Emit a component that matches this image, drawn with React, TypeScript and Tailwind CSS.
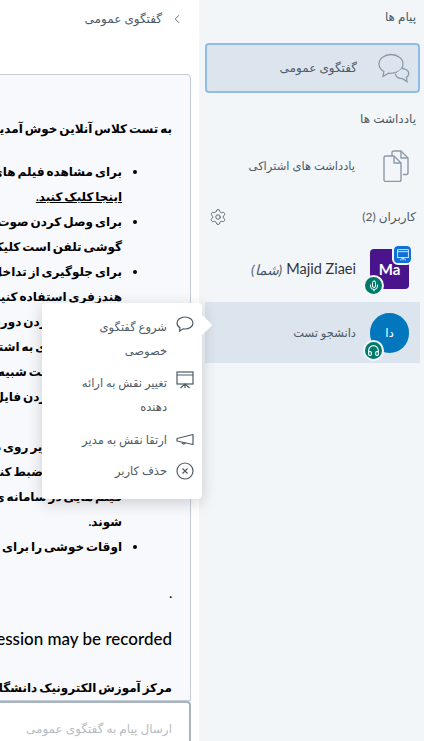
import { ChevronLeft, Headphones, Mic, Settings } from 'lucide-react';

const bodyLines = [
    { text: 'برای مشاهده فیلم های آموزشی سیستم لطفا', bullet: true },
    { text: 'اینجا کلیک کنید.', link: true },
    { text: 'برای وصل کردن صوت خود بر روی دکمه ای که', bullet: true },
    { text: 'گوشی تلفن است کلیک کنید و منتظر بمانید' },
    { text: 'برای جلوگیری از تداخل صدا و نویز از', bullet: true },
    { text: 'هندزفری استفاده کنید و صدای خود را' },
    { text: 'برای روشن کردن دوربین خود لطفا', bullet: true },
    { text: 'در صورت نیازی به اشتراک گذاری نیست' },
    { text: 'برای همین حالت شبیه سازی', bullet: true },
    { text: 'و نیز با آپلود کردن فایل استفاده کنید' },
    { text: 'برای ضبط', bullet: true },
    { text: 'با کلیک بر تصویر روی دکمه' },
    { text: 'کلاسی خود را ضبط کنید تا جلسه' },
    { text: 'فیلم هایی در سامانه ی آموزش' },
    { text: 'شوند.' },
    { text: 'اوقات خوشی را برای شما آرزو داریم', bullet: true },
];

const ChatIcon = () => (
    <svg viewBox="0 0 32 30" fill="none" stroke="currentColor" strokeWidth="1.3" className="h-[30px] w-[32px]">
        <path d="M13 1.500C6.500 1.500 1 5.500 1 11c0 3.200 2 5.800 4.800 7.500l-.8 5 5.500-3.400c.8.100 1.600.200 2.500.200 6.500 0 12-3.900 12-9.300S19.500 1.500 13 1.500Z" />
        <path d="M24 15.500c3.700 0 6.800 2.200 6.800 5 0 1.600-1 3-2.400 3.900l.6 4.300-4.300-3c-3.900.100-7.300-2-7.300-5" fill="#dce4ed" />
    </svg>
);

const NotesIcon = () => (
    <svg viewBox="0 0 26 32" fill="none" stroke="currentColor" strokeWidth="1.4" strokeLinejoin="round" className="h-[32px] w-[26px]">
        <path d="M9 6V2.500C9 1.700 9.700 1 10.500 1H18l7 7v15c0 .800-.700 1.500-1.500 1.500H20" />
        <path d="M18 1v7h7" />
        <path d="M2.500 6H11l7 7v17c0 .800-.700 1.500-1.500 1.500h-14C1.700 31.500 1 30.800 1 30V7.500C1 6.700 1.700 6 2.500 6Z" />
        <path d="M11 6v7h7" />
    </svg>
);

const ScreenIcon = ({ className }: { className: string }) => (
    <svg viewBox="0 0 18 18" fill="none" stroke="currentColor" strokeWidth="1.200" className={className}>
        <rect x="1" y="1" width="16" height="12" />
        <path d="M1 4h16M9 13v4M4.500 17 9 13l4.500 4" />
    </svg>
);

const BubbleIcon = () => (
    <svg viewBox="0 0 18 18" fill="none" stroke="currentColor" strokeWidth="1.200" className="ml-[9px] h-[18px] w-[18px] shrink-0">
        <path d="M9 2C4.600 2 1 4.700 1 8c0 1.900 1.200 3.600 3 4.700L3.500 16l3.800-2.200c.6.100 1.100.200 1.700.200 4.400 0 8-2.700 8-6s-3.600-6-8-6Z" />
    </svg>
);

const HornIcon = () => (
    <svg viewBox="0 0 18 18" fill="none" stroke="currentColor" strokeWidth="1.200" strokeLinejoin="round" className="ml-[9px] h-[18px] w-[18px] shrink-0">
        <path d="M17 3.500v10L1 10V7.500l16-4Z" />
        <path d="M6 11.500c0 1.500 2.500 2 3.500 .5" />
    </svg>
);

const RemoveIcon = () => (
    <svg viewBox="0 0 18 18" fill="none" stroke="currentColor" strokeWidth="1.200" className="ml-[9px] h-[18px] w-[18px] shrink-0">
        <circle cx="9" cy="9" r="8" />
        <path d="m6.500 6.500 5 5m0-5-5 5" />
    </svg>
);

const App = () => {
    return (
        <div dir="rtl" className="relative flex h-[741px] w-[424px] overflow-hidden bg-[#f3f6f9] font-['Lato','DejaVu_Sans',sans-serif] text-[#333]">
            <aside className="flex w-[225px] shrink-0 flex-col pr-[4px] pl-[6px]">
                <h2 className="mt-[7px] pr-[4px] text-[12px] leading-[20px] text-[#4e5a66]">پیام ها</h2>
                <div className="mt-[16px] flex h-[50px] items-center rounded-[4px] border-[2px] border-[#92bce8] bg-[#dce4ed] pr-[8px] text-[#8b9aa8]">
                    <ChatIcon />
                    <span className="mr-[21px] text-[12px] text-[#4e5a66]">گفتگوی عمومی</span>
                </div>
                <h2 className="mt-[16px] pr-[4px] text-[12px] leading-[20px] text-[#4e5a66]">یادداشت ها</h2>
                <div className="mt-[21px] flex h-[32px] items-center pr-[11px] text-[#8b9aa8]">
                    <NotesIcon />
                    <span className="mr-[28px] text-[11.5px] text-[#4e5a66]">یادداشت های اشتراکی</span>
                </div>
                <div className="mt-[25px] flex items-center justify-between pr-[4px] pl-[4px]">
                    <h2 className="text-[12px] leading-[20px] text-[#4e5a66]">کاربران (2)</h2>
                    <Settings strokeWidth={1.2} className="h-[18px] w-[18px] text-[#4e5a66]" />
                </div>
                <div className="mt-[22px] flex h-[40px] items-center pr-[11px]">
                    <div dir="ltr" className="relative h-[40px] w-[39px] rounded-[4px] bg-[#4a148c] text-center text-[15px] leading-[40px] font-bold text-white">
                        Ma
                        <span className="absolute -top-[3px] -right-[2px] flex h-[17px] w-[17px] items-center justify-center rounded-[4px] bg-[#0f70d7] outline-2 outline-[#f3f6f9]">
                            <ScreenIcon className="h-[12px] w-[12px] text-white" />
                        </span>
                        <span className="absolute -bottom-[7px] -left-[7px] flex h-[21px] w-[21px] items-center justify-center rounded-full border-2 border-[#f3f6f9] bg-[#00796b]">
                            <Mic className="h-[12px] w-[12px]" />
                        </span>
                    </div>
                    <span className="mr-[14px] flex items-center gap-[4px] text-[14.500px] text-[#333]">
                        <span>Majid Ziaei</span>
                        <span className="text-[14px] text-[#4e5a66] italic">(شما)</span>
                    </span>
                </div>
                <div className="mt-[13px] flex h-[61px] items-center bg-[#dce4ed] pr-[11px]">
                    <div className="relative h-[40px] w-[39px] rounded-full bg-[#0277bd] text-center text-[12px] leading-[40px] text-white">
                        دا
                        <span className="absolute -bottom-[8px] -left-[7px] flex h-[21px] w-[21px] items-center justify-center rounded-full border-2 border-[#f3f6f9] bg-[#00796b] text-white">
                            <Headphones className="h-[13px] w-[13px]" strokeWidth={2} />
                        </span>
                    </div>
                    <span className="mr-[14px] text-[11.500px] text-[#4e5a66]">دانشجو تست</span>
                </div>
            </aside>

            <main className="flex w-[199px] shrink-0 flex-col overflow-hidden bg-white">
                <div className="flex h-[37px] items-center pr-[15px] text-[12px] text-[#4e5a66]">
                    <ChevronLeft className="ml-[8px] h-[14px] w-[14px]" strokeWidth={1.5} />
                    <span>گفتگوی عمومی</span>
                </div>
                <div className="mt-[37px] mr-[8px] h-[627px] w-[420px] shrink-0 rounded-t-[4px] border border-[#c3ccd6] bg-[#f8f9fc] pt-[41px] pr-[18px] text-[12px] leading-[25px] font-bold whitespace-nowrap text-black [word-spacing:-1px]">
                    <p>به تست کلاس آنلاین خوش آمدید</p>
                    <ul className="mt-[18px] pr-[50px]">
                        {bodyLines.map((line, i) => (
                            <li key={i} className={`${line.bullet ? 'list-disc' : 'list-none'} ${line.link ? 'underline' : ''}`}>
                                {line.text}
                            </li>
                        ))}
                    </ul>
                    <p className="mt-[22px] leading-[25px]">.</p>
                    <p className="mt-[20px] text-[17px] font-medium [word-spacing:0]">This session may be recorded.</p>
                    <p className="mt-[24px]">مرکز آموزش الکترونیک دانشگاه</p>
                </div>
                <div className="mr-[8px] h-[40px] w-[420px] shrink-0 rounded-t-[4px] border-2 border-b-0 border-[#a7b3bd] bg-white pt-[18px] pr-[17px] text-[12px] leading-[16px] text-[#b4bcc4]">
                    ارسال پیام به گفتگوی عمومی
                </div>
            </main>

            {/* user menu */}
            <div className="absolute top-[303px] left-[42px] h-[196px] w-[160px] rounded-[4px] bg-white pt-[12px] pr-[8px] pl-[24px] text-[11.500px] leading-[24px] text-[#4e5a66] shadow-[0_4px_16px_rgba(0,0,0,0.18)]">
                <span className="absolute top-[14px] -right-[7px] h-[16px] w-[16px] rotate-45 bg-white" />
                <div className="relative flex items-start">
                    <BubbleIcon />
                    <span>شروع گفتگوی خصوصی</span>
                </div>
                <div className="relative mt-[8px] flex items-start">
                    <ScreenIcon className="ml-[9px] h-[18px] w-[18px] shrink-0" />
                    <span>تغییر نقش به ارائه دهنده</span>
                </div>
                <div className="relative mt-[9px] flex items-center">
                    <HornIcon />
                    <span>ارتقا نقش به مدیر</span>
                </div>
                <div className="relative mt-[7px] flex items-center">
                    <RemoveIcon />
                    <span>حذف کاربر</span>
                </div>
            </div>
        </div>
    );
};

export default App;
